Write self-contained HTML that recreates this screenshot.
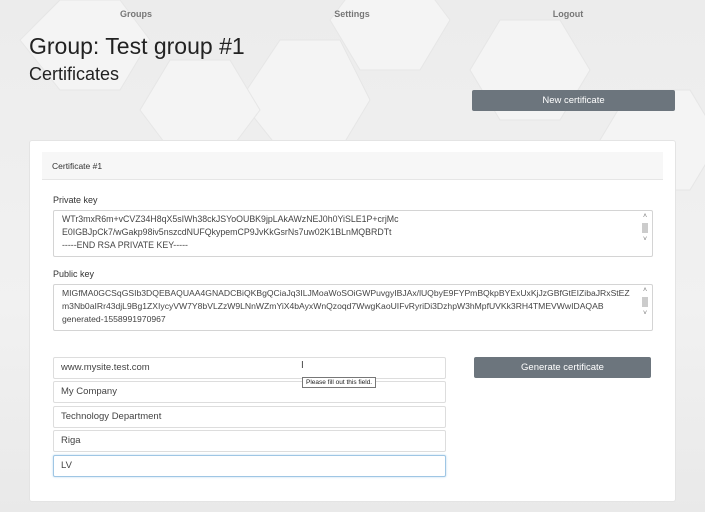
<!DOCTYPE html>
<html><head><style>
*{box-sizing:border-box;margin:0;padding:0}
body{width:705px;height:512px;overflow:hidden;font-family:"Liberation Sans",sans-serif;background:linear-gradient(180deg,#ececec,#f1f1f1 60%,#e9e9e9);position:relative;color:#222}
.a{position:absolute}
.nav{top:9px;font-size:9px;font-weight:bold;color:#777;width:100px;text-align:center}
.btn{background:#6c757d;color:#fff;font-size:9.5px;text-align:center;border-radius:2px}
.ta{background:#fff;border:1px solid #d4d4d4;border-radius:2px;font-size:8.8px;line-height:13px;padding:2px 8px;color:#444;white-space:nowrap;overflow:hidden}
.in{left:53px;width:393px;height:22px;background:#fff;border:1px solid #ddd;border-radius:2px;font-size:9.5px;line-height:20px;padding-left:7px;color:#444}
.lbl{font-size:9px;color:#333}
.sb{right:4px;width:6px;font-size:7px;color:#777;text-align:center;line-height:8px}
</style></head><body>
<svg class="a" style="left:0;top:0" width="705" height="512">
<g fill="#f4f4f4" stroke="#e6e6e6" stroke-width="1">
<polygon points="20,40 60,0 120,0 150,40 120,90 60,90"/>
<polygon points="240,100 280,40 340,40 370,100 340,150 280,150"/>
<polygon points="470,70 500,20 560,20 590,70 560,120 500,120"/>
<polygon points="600,140 630,90 690,90 720,140 690,190 630,190"/>
<polygon points="140,110 170,60 230,60 260,110 230,150 170,150"/>
<polygon points="330,20 360,-20 420,-20 450,20 420,70 360,70"/>
</g></svg>
<div class="a nav" style="left:86px">Groups</div>
<div class="a nav" style="left:302px">Settings</div>
<div class="a nav" style="left:518px">Logout</div>
<div class="a" style="left:29px;top:33px;font-size:23px;color:#222">Group: Test group #1</div>
<div class="a" style="left:29px;top:64px;font-size:18px;color:#222">Certificates</div>
<div class="a btn" style="left:472px;top:90px;width:203px;height:21px;line-height:21px">New certificate</div>
<div class="a" style="left:29px;top:140px;width:647px;height:362px;background:#fff;border:1px solid #e4e4e4;border-radius:3px"></div>
<div class="a" style="left:42px;top:152px;width:621px;height:28px;background:#f7f7f7;border-bottom:1px solid #e6e6e6;font-size:8.5px;line-height:28px;padding-left:10px;color:#333">Certificate #1</div>
<div class="a lbl" style="left:53px;top:195px">Private key</div>
<div class="a ta" style="left:53px;top:210px;width:600px;height:47px">WTr3mxR6m+vCVZ34H8qX5sIWh38ckJSYoOUBK9jpLAkAWzNEJ0h0YiSLE1P+crjMc<br>E0IGBJpCk7/wGakp98iv5nszcdNUFQkypemCP9JvKkGsrNs7uw02K1BLnMQBRDTt<br>-----END RSA PRIVATE KEY-----
<div class="a sb" style="top:2px">˄<br><span style="display:inline-block;width:6px;height:10px;background:#ccc;margin-top:2px"></span><br>˅</div></div>
<div class="a lbl" style="left:53px;top:269px">Public key</div>
<div class="a ta" style="left:53px;top:284px;width:600px;height:47px;font-size:8.6px">MIGfMA0GCSqGSIb3DQEBAQUAA4GNADCBiQKBgQCiaJq3ILJMoaWoSOiGWPuvgyIBJAx/lUQbyE9FYPmBQkpBYExUxKjJzGBfGtEIZibaJRxStEZ<br>m3Nb0aIRr43djL9Bg1ZXIycyVW7Y8bVLZzW9LNnWZmYiX4bAyxWnQzoqd7WwgKaoUIFvRyriDi3DzhpW3hMpfUVKk3RH4TMEVWwIDAQAB<br>generated-1558991970967
<div class="a sb" style="top:2px;background:#fff">˄<br><span style="display:inline-block;width:6px;height:10px;background:#ccc;margin-top:2px"></span><br>˅</div></div>
<div class="a in" style="top:357px">www.mysite.test.com</div>
<div class="a in" style="top:381px">My Company</div>
<div class="a in" style="top:406px">Technology Department</div>
<div class="a in" style="top:430px">Riga</div>
<div class="a in" style="top:455px;border:1px solid #9fc6e4;box-shadow:0 0 2px #b9d8ee">LV</div>
<div class="a" style="left:302px;top:377px;font-size:6.5px;background:#fff;border:1px solid #777;padding:1px 3px;color:#222">Please fill out this field.</div>
<div class="a" style="left:301px;top:360px;font-size:10px;color:#444">I</div>
<div class="a btn" style="left:474px;top:357px;width:177px;height:21px;line-height:21px">Generate certificate</div>
</body></html>
